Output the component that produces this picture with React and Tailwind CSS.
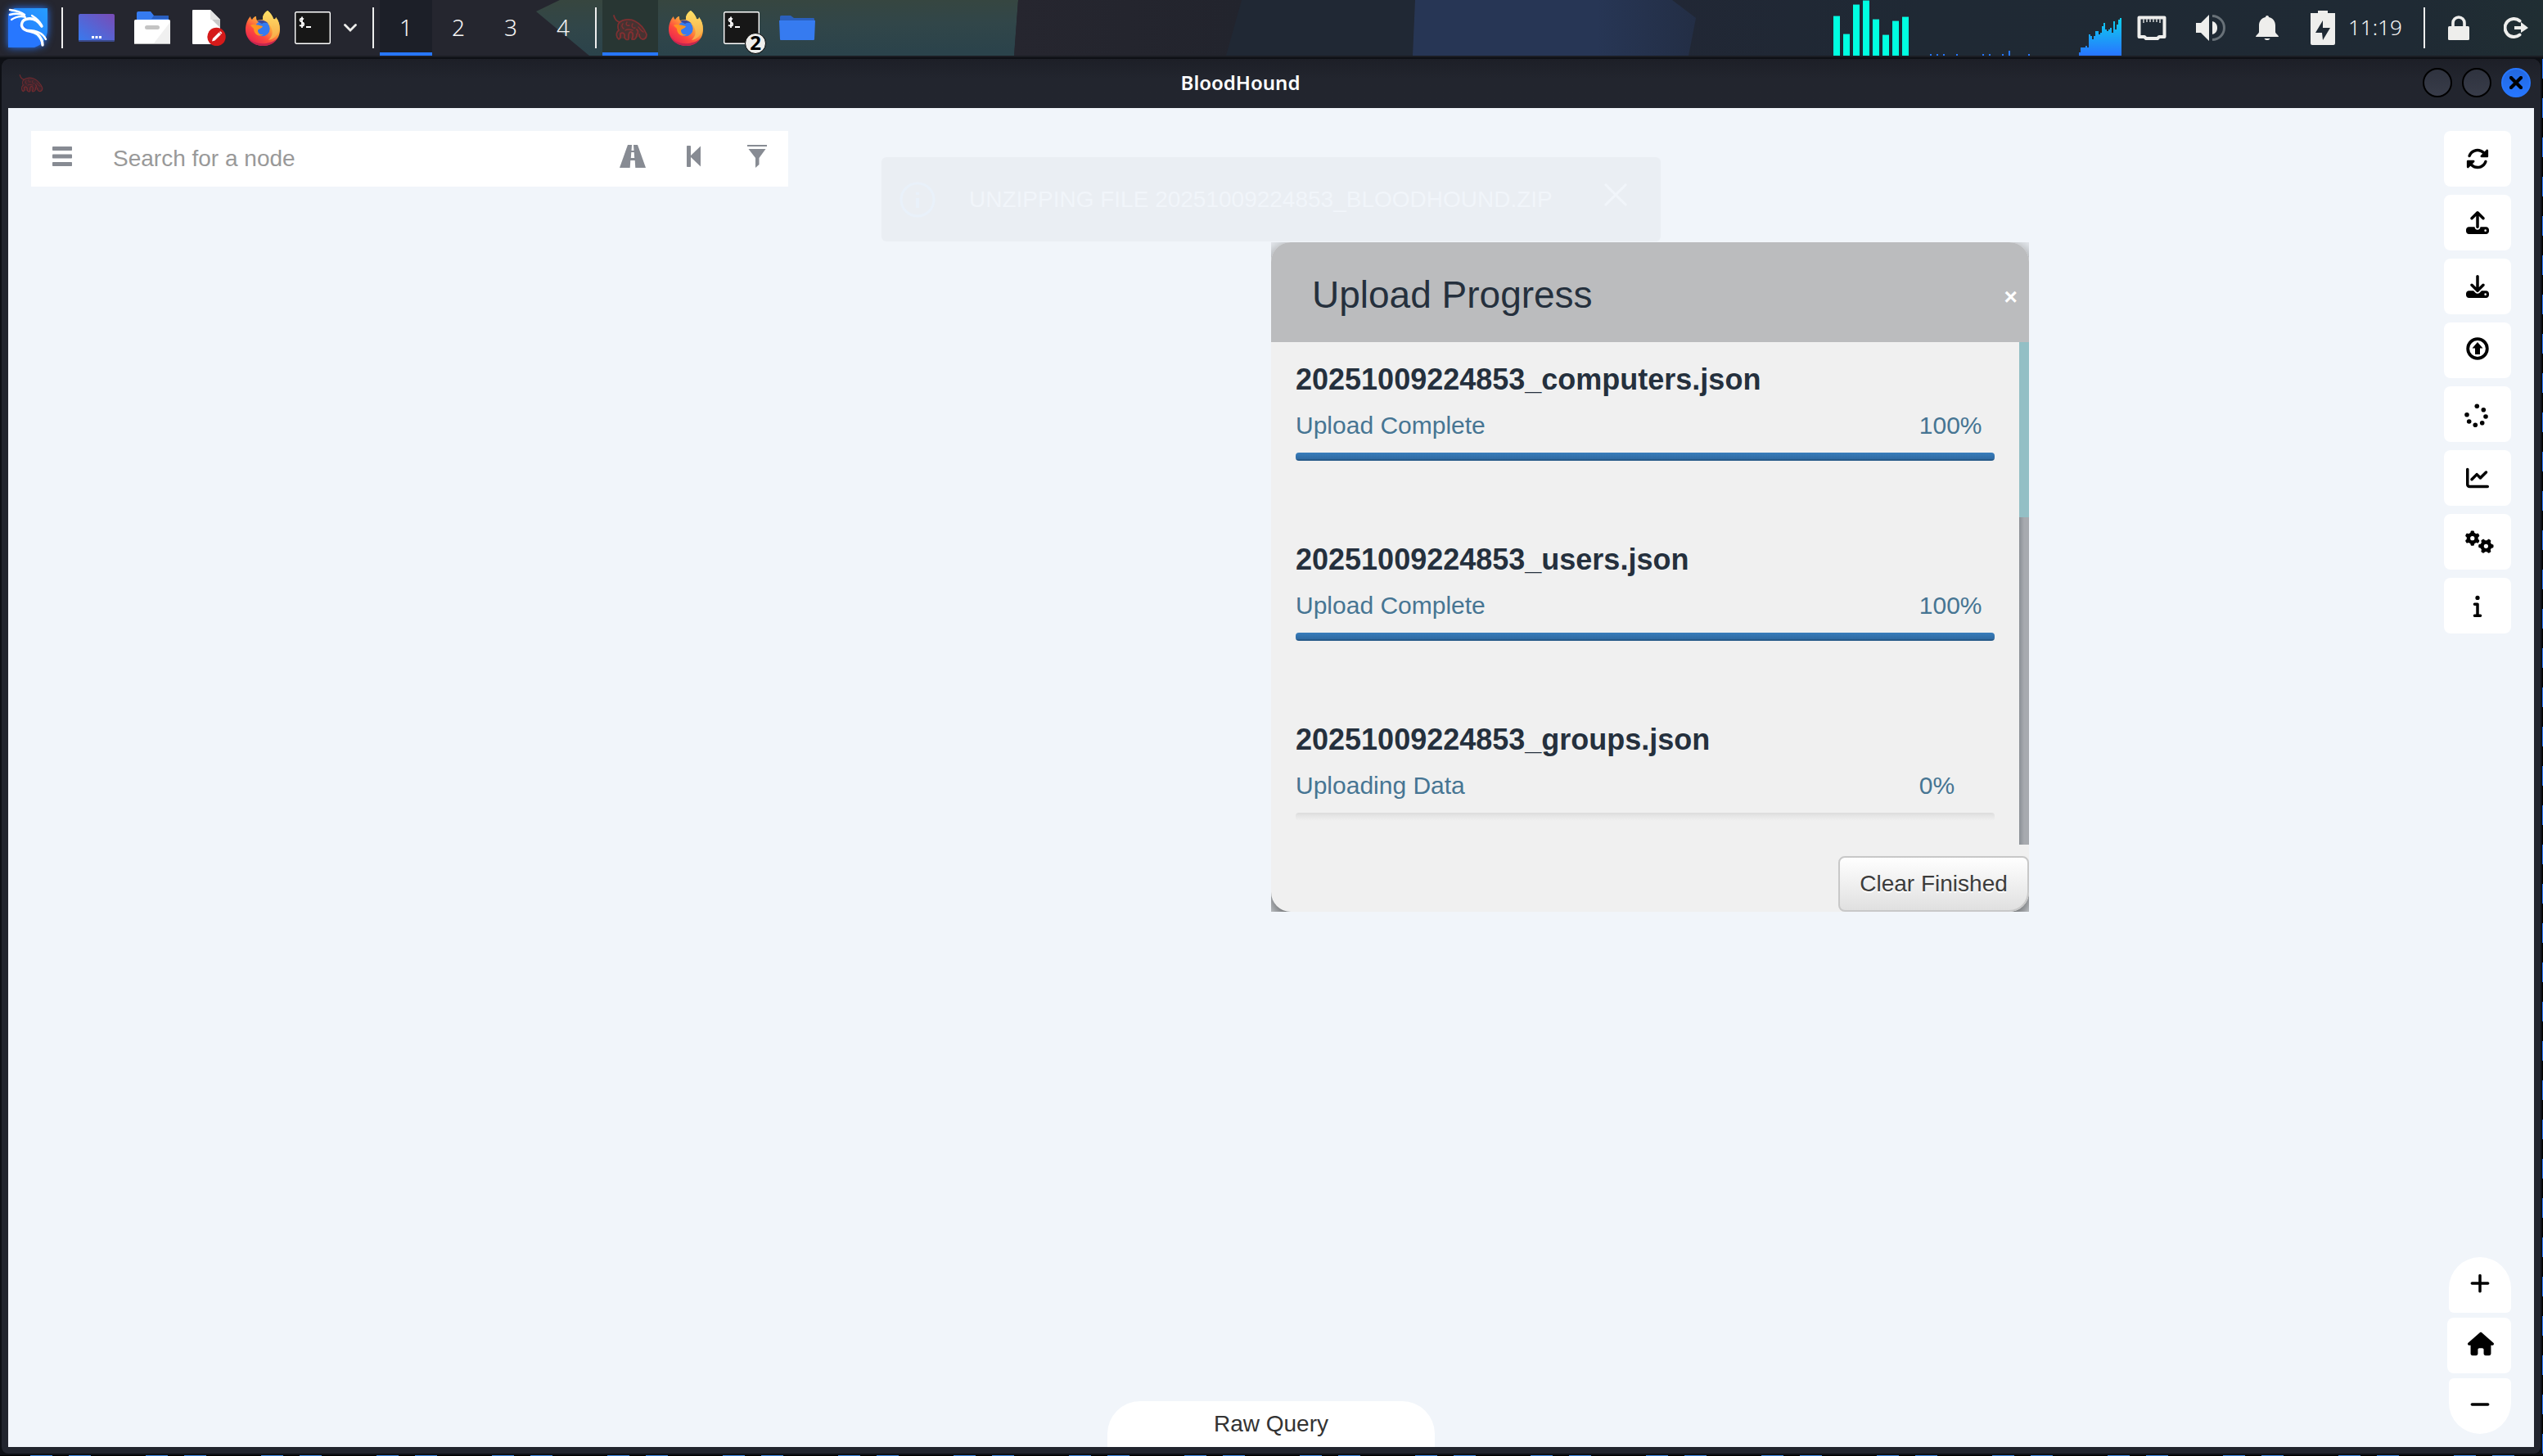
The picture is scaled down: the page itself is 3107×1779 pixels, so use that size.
import React from "react";
import {
  FaRotate,
  FaUpload,
  FaDownload,
  FaChartLine,
  FaGears,
  FaInfo,
  FaPlus,
  FaHouse,
  FaMinus,
} from "react-icons/fa6";

/* ---------- panel artwork ---------- */

function PanelBackdrop() {
  return (
    <svg className="absolute inset-0 h-full w-full" viewBox="0 0 3107 68" preserveAspectRatio="none" aria-hidden="true">
      <defs>
        <linearGradient id="green" x1="0" y1="0" x2="0.1" y2="1">
          <stop offset="0" stopColor="#37463f" />
          <stop offset="0.5" stopColor="#314649" />
          <stop offset="1" stopColor="#2b434b" />
        </linearGradient>
        <linearGradient id="plum" x1="0" y1="0" x2="1" y2="0">
          <stop offset="0" stopColor="#26262f" />
          <stop offset="1" stopColor="#22242d" />
        </linearGradient>
        <linearGradient id="navy" x1="0" y1="0" x2="1" y2="0">
          <stop offset="0" stopColor="#273655" />
          <stop offset="0.65" stopColor="#273655" />
          <stop offset="1" stopColor="#232e45" />
        </linearGradient>
        <linearGradient id="slate" x1="0" y1="0" x2="1" y2="0">
          <stop offset="0" stopColor="#212735" />
          <stop offset="0.3" stopColor="#1f2934" />
          <stop offset="0.85" stopColor="#1f2a34" />
          <stop offset="1" stopColor="#202e33" />
        </linearGradient>
      </defs>
      <rect width="3107" height="68" fill="#25262f" />
      <path d="M655 14 L684 0 H1244 L1239 68 H720 Z" fill="url(#green)" />
      <path d="M1244 0 H1517 L1498 68 H1239 Z" fill="url(#plum)" />
      <path d="M1517 0 H1729 L1726 68 H1498 Z" fill="#202834" />
      <path d="M2030 0 H3107 V68 H2030 Z" fill="url(#slate)" />
      <path d="M1729 0 H2043 L2072 22 L2063 68 H1726 Z" fill="url(#navy)" />
    </svg>
  );
}

function DragonLogo() {
  return (
    <svg className="size-12 drop-shadow-[0_0_5px_#2777ff]" viewBox="0 0 48 48" aria-hidden="true">
      <defs>
        <linearGradient id="kali" x1="1" y1="0" x2="0" y2="1">
          <stop offset="0" stopColor="#269dff" />
          <stop offset="0.5" stopColor="#2687ff" />
          <stop offset="0.52" stopColor="#2777ff" />
          <stop offset="1" stopColor="#2777ff" />
        </linearGradient>
      </defs>
      <path d="M8 0H48V26C48 36 42 45 32 48H0V8C3 4 4 2 8 0Z" fill="url(#kali)" />
      <g fill="none" stroke="#fff" strokeLinecap="round" strokeLinejoin="round">
        <path d="M2 2C9 3 15 4 20 8" strokeWidth="2.4" />
        <path d="M2 8C9 6 14 6 20 9" strokeWidth="2.4" />
        <path d="M4 14C10 10 15 9 21 11" strokeWidth="2.2" />
        <path d="M41 22C37 16 31 12 24 13C16 14 14 22 20 26C25 29 31 28 36 32C40 36 42 40 42 45" strokeWidth="3.4" />
        <path d="M24 27C34 27 42 30 46 38" strokeWidth="2.4" />
        <path d="M29 9C34 12 38 15 41 21" strokeWidth="2.2" />
      </g>
    </svg>
  );
}

function DesktopIcon() {
  return (
    <svg className="h-[34px] w-11" viewBox="0 0 44 34" aria-hidden="true">
      <defs>
        <linearGradient id="desk" x1="0" y1="1" x2="1" y2="0">
          <stop offset="0" stopColor="#367bf0" />
          <stop offset="1" stopColor="#7a4bb5" />
        </linearGradient>
      </defs>
      <rect width="44" height="34" rx="2" fill="url(#desk)" />
      <path d="M0 32H44V32Q44 34 42 34H2Q0 34 0 32Z" fill="#3b4a8c" />
      <path d="M16 27h3v3h-3zM20.500 27h3v3h-3zM25 27h3v3h-3z" fill="#fff" />
    </svg>
  );
}

function FilesIcon() {
  return (
    <svg className="h-10 w-11" viewBox="0 0 44 40" aria-hidden="true">
      <path d="M3 2Q3 0 5 0H20L24 5H41Q42 5 42 7V12H3Z" fill="#367bf0" />
      <path d="M24 5H41Q42 5 42 7V9H21Z" fill="#2a5fbf" />
      <rect y="10" width="44" height="30" rx="1.500" fill="#fff" />
      <path d="M23 40L44 13V38.500Q44 40 42.500 40Z" fill="#f0f0f0" />
      <rect x="13" y="17" width="18" height="5" rx="2.500" fill="#c4c4c4" />
      <rect y="39" width="44" height="1" fill="#b9b9b9" />
    </svg>
  );
}

function EditorIcon() {
  return (
    <svg className="h-11 w-[41px]" viewBox="0 0 41 44" aria-hidden="true">
      <path d="M1 0H22L34 12V42H1Q0 42 0 41V1Q0 0 1 0Z" fill="#fff" />
      <path d="M22 0L34 12H22Z" fill="#e3e3e3" />
      <path d="M24 12H34V22Z" fill="#c9c9c9" />
      <circle cx="29.500" cy="33" r="11.200" fill="#d51a1a" />
      <path d="M24 38.500L25 35L32.500 27.500L35 30L27.500 37.500Z" fill="#fff" />
      <path d="M33 27L35.500 29.500L36.300 28.200L34.200 26.200Z" fill="#fff" />
    </svg>
  );
}

function FirefoxIcon() {
  return (
    <svg className="h-[43px] w-[42px]" viewBox="0 0 42 43" aria-hidden="true">
      <defs>
        <linearGradient id="fox" x1="0.85" y1="0.1" x2="0.25" y2="0.95">
          <stop offset="0" stopColor="#ffe45c" />
          <stop offset="0.4" stopColor="#ffa13a" />
          <stop offset="0.7" stopColor="#ff4a3d" />
          <stop offset="1" stopColor="#e8264f" />
        </linearGradient>
        <linearGradient id="foxtail" x1="0" y1="0" x2="0" y2="1">
          <stop offset="0" stopColor="#ffe066" />
          <stop offset="1" stopColor="#f7a848" />
        </linearGradient>
      </defs>
      <path d="M27 0C31 3 33 7 34 10C36 11 37 10 37 8C41 13 42 18 42 23C42 35 33 43 21 43C9 43 0 34 0 23C0 16 3 10 6 7C6 9 7 10 8 11C9 9 11 7 13 7C13 9 13 10 14 12C17 11 19 11 21 11C21 6 23 2 27 0Z" fill="url(#fox)" />
      <path d="M27 0C31 3 33 7 34 10C36 11 37 10 37 8C41 13 42 18 41 24C39 31 34 35 28 36C33 31 34 26 31 20C28 14 21 13 21 9C21 5 24 2 27 0Z" fill="url(#foxtail)" />
      <circle cx="20.500" cy="22" r="9.200" fill="#367bf0" />
      <path d="M14 13C18 11 24 11 28 16C25 14 22 15 20 16Z" fill="#3a4a9c" />
      <path d="M6 18C9 16 14 17 21 19C20 22 16 22 15 24C15 28 18 30 22 29C17 33 10 29 10 22Z" fill="#ff9420" />
      <path d="M2 31C7 39 16 41 25 40C31 39 36 37 39 33C36 40 29 43 21 43C12 43 5 38 2 31Z" fill="#c4264f" />
    </svg>
  );
}

function TerminalIcon() {
  return (
    <svg className="h-10 w-11" viewBox="0 0 44 40" aria-hidden="true">
      <rect x="0.700" y="0.700" width="42.600" height="38.600" rx="1.500" fill="#171717" stroke="#fff" strokeWidth="1.400" />
      <path d="M11 9.500C9 8 6.500 8.500 6.500 10.500C6.500 13 11.300 12.500 11.300 15.500C11.300 18 8 18.200 6 16.800M9 6.500V20" fill="none" stroke="#fff" strokeWidth="1.800" />
      <rect x="14" y="18" width="6" height="2" fill="#fff" />
    </svg>
  );
}

function HoundIcon({ className, color }) {
  return (
    <svg className={className} viewBox="0 0 42 32" aria-hidden="true">
      <path d="M8 9C15 5 24 6 29 10C35 14 39 19 41 28L38 30L32 27L24 29L18 29L8 29L6 24L8 17Z" fill={color} opacity="0.3" />
      <g fill="none" stroke={color} strokeWidth="1.800" strokeLinecap="round" strokeLinejoin="round" opacity="0.85">
        <path d="M1 1C2 5 4 8 8 9C14 5 22 5 27 8C33 11 38 17 41 24C41 28 39 30 36 30C33 29 32 27 32 24" />
        <path d="M8 9C5 12 6 17 7 19C3 22 4 28 7 30C10 29 9 26 9 23C12 21 15 23 14 27C14 30 17 31 19 30C19 26 18 23 21 21C25 21 25 26 23 30C27 31 29 28 29 24C31 22 31 20 29 18" />
        <path d="M12 11C10 13 11 16 13 17M17 9C15 12 17 14 20 13M24 11C22 14 24 17 27 16M31 15C33 17 34 20 37 21M15 19C18 17 21 18 24 19" strokeWidth="1.400" />
      </g>
    </svg>
  );
}

function FolderIcon() {
  return (
    <svg className="h-[30px] w-11" viewBox="0 0 44 30" aria-hidden="true">
      <path d="M1 1.500Q1 0 2.500 0H14L18 3H42Q43 3 43 4.500V10H1Z" fill="#2b60bd" />
      <path d="M0 6H44L43 29Q43 30 42 30H2Q1 30 1 29Z" fill="#367bf0" />
    </svg>
  );
}

function Separator() {
  return <span className="block h-[50px] w-0.5 shrink-0 bg-[#eeeeee]" />;
}

const coreLoad = [49, 27, 63, 68, 45, 26, 43, 48];
const diskTicks = [
  [0, 2], [8, 2], [16, 2], [32, 2], [64, 2], [72, 2], [88, 2], [96, 6], [120, 2],
];
const cpuHistory = [4, 10, 10, 10, 12, 10, 26, 24, 20, 24, 30, 30, 26, 28, 36, 40, 32, 30, 32, 34, 28, 42, 32, 38, 44, 46];

function CoreLoad() {
  return (
    <svg className="h-[68px] w-[92px]" viewBox="0 0 92 68" aria-label="Core load">
      {coreLoad.map((h, i) => (
        <g key={i}>
          <rect x={i * 12} y={68 - h} width="8" height={h} fill="#00ffe1" />
          <rect x={i * 12} y={68 - h} width="8" height="1" fill="#1b7d7d" />
        </g>
      ))}
    </svg>
  );
}

function DiskTicks() {
  return (
    <svg className="h-[68px] w-[122px]" viewBox="0 0 122 68" aria-label="Disk activity">
      {diskTicks.map(([x, h]) => (
        <rect key={x} x={x} y={68 - h} width="2" height={h} fill="#2777ff" />
      ))}
    </svg>
  );
}

function CpuGraph() {
  return (
    <svg className="h-[68px] w-[52px]" viewBox="0 0 52 68" aria-label="CPU history">
      <defs>
        <linearGradient id="cpu" gradientUnits="userSpaceOnUse" x1="0" y1="18" x2="0" y2="68">
          <stop offset="0" stopColor="#0bd8ec" />
          <stop offset="1" stopColor="#2874ff" />
        </linearGradient>
      </defs>
      {cpuHistory.map((h, i) => (
        <rect key={i} x={i * 2} y={68 - h} width="2" height={h} fill="url(#cpu)" shapeRendering="crispEdges" />
      ))}
    </svg>
  );
}

function EthernetIcon() {
  return (
    <svg className="h-[30px] w-9" viewBox="0 0 36 30" aria-hidden="true">
      <path d="M2.500 2.500H33.500V26H27L25 28H11L9 26H2.500Z" fill="none" stroke="#eeeeec" strokeWidth="4" strokeLinejoin="round" />
      <path d="M8 4V9M12 4V8M16 4V8M20 4V8M24 4V8M28 4V9" stroke="#c9cccd" strokeWidth="1.600" />
    </svg>
  );
}

function VolumeIcon() {
  return (
    <svg className="h-8 w-9" viewBox="0 0 36 32" aria-hidden="true">
      <path d="M0 10H6L16 0V32L6 22H0Z" fill="#eeeeec" />
      <path d="M20 8C24 9 26 12 26 16C26 20 24 23 20 24Z" fill="#eeeeec" />
      <path d="M20 1.500A14.500 14.500 0 0 1 20 30.500" fill="none" stroke="#687178" strokeWidth="3" />
    </svg>
  );
}

function BellIcon() {
  return (
    <svg className="h-[30px] w-7" viewBox="0 0 28 30" aria-hidden="true">
      <path d="M14 0C15.200 0 16 0.800 16 2C21 3 24 7 24 12V20C24 22 28 24 28 26H0C0 24 4 22 4 20V12C4 7 7 3 12 2C12 0.800 12.800 0 14 0Z" fill="#eeeeec" />
      <path d="M10.500 28H17.500C17 29.500 15.500 30 14 30C12.500 30 11 29.500 10.500 28Z" fill="#eeeeec" />
    </svg>
  );
}

function BatteryIcon() {
  return (
    <svg className="h-[42px] w-[30px]" viewBox="0 0 30 42" aria-hidden="true">
      <path
        fillRule="evenodd"
        d="M9 0H21V3H30V40Q30 42 28 42H2Q0 42 0 40V3H9ZM15 12L6 27H14L15 36L24 21H15Z"
        fill="#eeeeec"
      />
    </svg>
  );
}

function LockIcon() {
  return (
    <svg className="h-[30px] w-[26px]" viewBox="0 0 26 30" aria-hidden="true">
      <rect y="13" width="26" height="17" rx="1.500" fill="#eeeeec" />
      <path d="M6 14V9A7 7 0 0 1 20 9V14" fill="none" stroke="#eeeeec" strokeWidth="3.600" />
    </svg>
  );
}

function LogoutIcon() {
  return (
    <svg className="h-[26px] w-[30px]" viewBox="0 0 30 26" aria-hidden="true">
      <path d="M19.500 4.500A11 11 0 1 0 19.500 21.500" fill="none" stroke="#eeeeec" strokeWidth="4" strokeLinecap="round" />
      <path d="M13 11H21V6L30 13L21 19V15H13Z" fill="#eeeeec" />
    </svg>
  );
}

function ChevronDown() {
  return (
    <svg className="h-2.5 w-4" viewBox="0 0 16 10" aria-hidden="true">
      <path d="M1.500 1.500L8 8L14.500 1.500" fill="none" stroke="#eeeeec" strokeWidth="2.800" strokeLinecap="round" />
    </svg>
  );
}

const workspaces = ["1", "2", "3", "4"];

function Workspace({ label, active }) {
  return (
    <button
      type="button"
      className={
        active
          ? "flex h-[68px] w-16 items-center justify-center border-b-4 border-[#2777ff] bg-[#1c1f28] pt-0.5 font-light text-[#f5f5f5]"
          : "flex h-[68px] w-16 items-center justify-center pb-0.5 font-light text-[#f5f5f5]"
      }
    >
      {label}
    </button>
  );
}

function TopPanel() {
  return (
    <header className="relative h-[68px] shrink-0 font-['Noto_Sans','Open_Sans',sans-serif] text-[28px] leading-none">
      <PanelBackdrop />
      <div className="relative flex h-full items-center pr-[18px] pl-2.5">
        <button type="button" aria-label="Applications"><DragonLogo /></button>
        <span className="ml-[17px]"><Separator /></span>
        <div className="ml-[19px] flex items-center gap-6">
          <button type="button" aria-label="Show desktop"><DesktopIcon /></button>
          <button type="button" aria-label="File manager"><FilesIcon /></button>
          <button type="button" aria-label="Text editor" className="flex w-11 justify-end"><EditorIcon /></button>
          <button type="button" aria-label="Firefox"><FirefoxIcon /></button>
        </div>
        <button type="button" aria-label="Terminal" className="ml-[18px]"><TerminalIcon /></button>
        <button type="button" aria-label="More terminals" className="ml-4"><ChevronDown /></button>
        <span className="ml-[19px]"><Separator /></span>
        <nav className="ml-[7px] flex">
          {workspaces.map((w, i) => (
            <Workspace key={w} label={w} active={i === 0} />
          ))}
        </nav>
        <span className="ml-[7px]"><Separator /></span>
        <button type="button" aria-label="BloodHound" className="ml-[7px] flex h-[68px] w-[68px] items-center justify-center border-b-4 border-[#2777ff] bg-[#283633] pt-1">
          <HoundIcon className="h-8 w-[42px]" color="#8e2f31" />
        </button>
        <button type="button" aria-label="Firefox window" className="ml-[13px]"><FirefoxIcon /></button>
        <button type="button" aria-label="Terminal windows" className="relative ml-[25px]">
          <TerminalIcon />
          <span className="absolute -right-2 -bottom-3 flex size-[26px] items-center justify-center rounded-full border border-black bg-[#eeeeec] pb-0.5 text-2xl leading-none font-bold text-black">
            2
          </span>
        </button>
        <button type="button" aria-label="Folder" className="ml-6"><FolderIcon /></button>

        <div className="ml-auto flex items-center">
          <CoreLoad />
          <span className="ml-[26px]"><DiskTicks /></span>
          <span className="ml-[60px]"><CpuGraph /></span>
          <button type="button" aria-label="Network" className="ml-[19px]"><EthernetIcon /></button>
          <button type="button" aria-label="Volume" className="ml-9"><VolumeIcon /></button>
          <button type="button" aria-label="Notifications" className="ml-[37px]"><BellIcon /></button>
          <button type="button" aria-label="Battery" className="ml-[39px]"><BatteryIcon /></button>
          <time className="ml-4 flex w-[74px] pb-0.5 text-[26px] font-light text-[#f5f5f5]">11:19</time>
          <span className="ml-[18px]"><Separator /></span>
          <button type="button" aria-label="Lock" className="ml-7"><LockIcon /></button>
          <button type="button" aria-label="Log out" className="ml-[42px]"><LogoutIcon /></button>
        </div>
      </div>
    </header>
  );
}

/* ---------- window ---------- */

function TitleBar() {
  return (
    <div className="grid h-[60px] shrink-0 grid-cols-[1fr_auto_1fr] items-center rounded-t-[10px] bg-linear-to-b from-[#1d1f27] to-[#22252e] to-40% pr-3 pl-[21px]">
      <HoundIcon className="h-[22px] w-[30px]" color="#7c2b30" />
      <h1 className="pr-[84px] pb-0.5 font-['Noto_Sans','Open_Sans',sans-serif] text-2xl font-semibold text-white">BloodHound</h1>
      <div className="flex gap-3 justify-self-end pb-0.5">
        <button type="button" aria-label="Minimize" className="size-9 rounded-full border-2 border-black bg-linear-to-b from-[#2f333f] to-[#383c49]" />
        <button type="button" aria-label="Maximize" className="size-9 rounded-full border-2 border-black bg-linear-to-b from-[#2f333f] to-[#383c49]" />
        <button type="button" aria-label="Close" className="flex size-9 items-center justify-center rounded-full border-2 border-[#2777ff] bg-linear-to-b from-[#2268e0] to-[#2777ff]">
          <svg className="size-4" viewBox="0 0 16 16" aria-hidden="true">
            <path d="M2 2L14 14M14 2L2 14" stroke="#000" strokeWidth="4.200" strokeLinecap="square" />
          </svg>
        </button>
      </div>
    </div>
  );
}

function HamburgerGlyph() {
  return (
    <svg className="size-6" viewBox="0 0 24 24" fill="#878b93" aria-hidden="true">
      <rect width="24" height="5" rx="0.800" />
      <rect y="9.500" width="24" height="5" rx="0.800" />
      <rect y="19" width="24" height="5" rx="0.800" />
    </svg>
  );
}

function RoadGlyph() {
  return (
    <svg className="h-7 w-8" viewBox="0 0 32 28" aria-hidden="true">
      <path d="M10 0H22L32 28H0Z" fill="#878b93" />
      <path d="M15 0H17L17.500 7H14.500ZM14.300 9H17.700L18.200 16H13.800ZM13.300 19H18.700L19.300 28H12.700Z" fill="#fff" />
    </svg>
  );
}

function StepBackGlyph() {
  return (
    <svg className="h-[26px] w-[17px]" viewBox="0 0 17 26" fill="#878b93" aria-hidden="true">
      <rect width="5" height="26" rx="0.800" />
      <path d="M17 0.500V25.500L5 14V12Z" />
    </svg>
  );
}

function FilterGlyph() {
  return (
    <svg className="h-7 w-6" viewBox="0 0 24 28" fill="#878b93" aria-hidden="true">
      <path d="M0 0H24V2H0Z" />
      <path d="M1.500 5H22.500L14.500 16V24L10 28V16Z" />
    </svg>
  );
}

function SearchBar() {
  return (
    <form className="flex h-[68px] w-full max-w-[925px] items-center bg-white px-[26px]" onSubmit={(e) => e.preventDefault()}>
      <button type="button" aria-label="Menu" className="pb-1.5"><HamburgerGlyph /></button>
      <input
        type="text"
        aria-label="Search for a node"
        placeholder="Search for a node"
        className="ml-[50px] h-full min-w-0 flex-1 bg-transparent text-[28px] text-[#333] outline-none placeholder:text-[#999]"
      />
      <button type="button" aria-label="Pathfinding" className="pb-1.5"><RoadGlyph /></button>
      <button type="button" aria-label="Back" className="ml-[50px] pb-1.5"><StepBackGlyph /></button>
      <button type="button" aria-label="Filter" className="ml-[57px] pb-1.5"><FilterGlyph /></button>
    </form>
  );
}

function CircleUpIcon({ className }) {
  return (
    <svg className={className} viewBox="0 0 28 32" aria-hidden="true">
      <circle cx="14" cy="14" r="11.800" fill="none" stroke="currentColor" strokeWidth="3.800" />
      <path d="M14 6L20.500 13.500H17V21H11V13.500H7.500Z" fill="currentColor" />
    </svg>
  );
}

const spinnerDots = [
  [13.3, 4.3], [21.3, 8.7], [24, 17], [19.7, 24.7], [11.3, 27.3], [3.7, 23], [1, 14.7],
];

function SpinnerIcon({ className }) {
  return (
    <svg className={className} viewBox="0 0 28 28" overflow="visible" fill="currentColor" aria-hidden="true">
      {spinnerDots.map(([x, y]) => (
        <circle key={x} cx={x} cy={y} r="2.800" />
      ))}
    </svg>
  );
}

const tools = [
  { label: "Refresh", Icon: FaRotate, size: "size-7" },
  { label: "Export graph", Icon: FaUpload, size: "size-7" },
  { label: "Import graph", Icon: FaDownload, size: "size-7" },
  { label: "Upload data", Icon: CircleUpIcon, size: "h-8 w-7" },
  { label: "Upload status", Icon: SpinnerIcon, size: "size-7" },
  { label: "Change layout", Icon: FaChartLine, size: "size-7" },
  { label: "Settings", Icon: FaGears, size: "ml-1 h-7 w-[35px]" },
  { label: "About", Icon: FaInfo, size: "size-7" },
];

function SideTools() {
  return (
    <aside className="flex flex-col items-end justify-between justify-self-end pb-4 text-black">
      <div className="flex flex-col gap-2.5">
        {tools.map(({ label, Icon, size }) => (
          <button key={label} type="button" aria-label={label} className="flex h-[68px] w-[82px] items-center justify-center rounded-lg bg-white">
            <Icon className={size} />
          </button>
        ))}
      </div>
      <div className="flex flex-col items-end gap-1.5">
        <button type="button" aria-label="Zoom in" className="flex h-[68px] w-[76px] items-center justify-center rounded-t-[38px] rounded-b-md bg-white pb-1">
          <FaPlus className="size-7" />
        </button>
        <button type="button" aria-label="Home" className="flex h-[68px] w-[78px] items-center justify-center rounded-lg bg-white pb-1">
          <FaHouse className="ml-1 size-8" />
        </button>
        <button type="button" aria-label="Zoom out" className="flex h-[68px] w-[76px] items-center justify-center rounded-t-md rounded-b-[38px] bg-white pb-1">
          <FaMinus className="size-7" />
        </button>
      </div>
    </aside>
  );
}

function Toast() {
  return (
    <div role="status" className="absolute top-[60px] left-1/2 flex h-[103px] w-[952px] -translate-x-1/2 items-center rounded-md bg-[#eaeef3] pr-10 pl-[22px] text-[28px] text-[#f1f5fa]">
      <svg className="size-11" viewBox="0 0 44 44" aria-hidden="true">
        <circle cx="22" cy="22" r="20" fill="none" stroke="#e9f1fa" strokeWidth="3" />
        <path d="M22 13V16M22 20V32" stroke="#e9f1fa" strokeWidth="4" />
      </svg>
      <p className="ml-[41px] flex-1 whitespace-nowrap">UNZIPPING FILE 20251009224853_BLOODHOUND.ZIP</p>
      <button type="button" aria-label="Dismiss" className="mb-3">
        <svg className="size-[30px]" viewBox="0 0 30 30" aria-hidden="true">
          <path d="M2 2L28 28M28 2L2 28" stroke="#f1f5fa" strokeWidth="3" />
        </svg>
      </button>
    </div>
  );
}

const uploads = [
  { file: "20251009224853_computers.json", status: "Upload Complete", percent: 100 },
  { file: "20251009224853_users.json", status: "Upload Complete", percent: 100 },
  { file: "20251009224853_groups.json", status: "Uploading Data", percent: 0 },
];

function UploadItem({ file, status, percent }) {
  return (
    <li className="h-[220px]">
      <h3 className="text-4xl leading-10 font-bold text-[#25303d]">{file}</h3>
      <div className="mt-3.5 flex justify-between text-[30px] leading-[44px] text-[#467593]">
        <span>{status}</span>
        <span className="w-[92px]">{percent}%</span>
      </div>
      <div
        role="progressbar"
        aria-label={file}
        aria-valuenow={percent}
        aria-valuemin={0}
        aria-valuemax={100}
        className="mt-[11px] h-2.5 overflow-hidden rounded-[4px] bg-linear-to-b from-[#dcdcdc] via-[#e8e8e8] to-[#f0f0f0]"
      >
        <div className="h-full border-b-2 border-[#275a89] bg-linear-to-b from-[#387dbb] to-[#2f6aa2]" style={{ width: `${percent}%` }} hidden={percent === 0} />
      </div>
    </li>
  );
}

function UploadDialog() {
  return (
    <div className="absolute top-[164px] left-1/2 w-[30%] overflow-hidden">
      <section role="dialog" aria-label="Upload Progress" className="overflow-hidden rounded-3xl bg-[#f0f0f0] shadow-[0_10px_30px_rgba(0,0,0,0.8)]">
        <header className="flex h-[122px] items-center justify-between bg-[#bbbcbe] pt-1.5 pr-3.5 pl-[50px]">
          <h2 className="text-[46px] leading-[60px] text-[#25303d]">Upload Progress</h2>
          <button type="button" aria-label="Close dialog" className="pt-1.5 text-[28px] leading-8 font-bold text-white">×</button>
        </header>
        <div className="flex h-[614px]">
          <ul className="min-w-0 flex-1 overflow-hidden px-[30px] pt-[26px]">
            {uploads.map((u) => (
              <UploadItem key={u.file} {...u} />
            ))}
          </ul>
          <div className="w-3 bg-linear-to-r from-[#8b9096] via-[#a7aaaf] to-[#a7aaaf]">
            <div className="h-[214px] bg-[#93bfc5]" />
          </div>
        </div>
        <footer className="flex justify-end pt-3.5">
          <button
            type="button"
            className="h-[68px] rounded-lg rounded-br-3xl border-2 border-[#c8c8c8] bg-linear-to-b from-white to-[#e0e0e0] px-6 text-[28px] text-[#3c3c3c] [text-shadow:0_2px_0_#fff]"
          >
            Clear Finished
          </button>
        </footer>
      </section>
    </div>
  );
}

function GraphView() {
  return (
    <main className="relative mx-2 grid flex-1 grid-cols-[1fr_auto_1fr] bg-[#f1f5fa] px-7 pt-7">
      <SearchBar />
      <button type="button" className="h-14 w-[400px] self-end rounded-t-[40px] bg-white text-[28px] text-[#333]">
        Raw Query
      </button>
      <SideTools />
      <Toast />
      <UploadDialog />
    </main>
  );
}

export default function App() {
  return (
    <div className="flex h-screen flex-col overflow-hidden bg-black font-['Liberation_Sans',Arial,sans-serif]">
      <TopPanel />
      <div className="h-0.5 shrink-0 bg-[#1b1d23]" />
      <div className="flex flex-1 bg-[#0e1015] pt-0.5 pl-0.5">
        <div className="flex flex-1 flex-col rounded-t-[10px] rounded-b-lg bg-[#22252e] pb-2">
          <TitleBar />
          <GraphView />
        </div>
        <div className="w-0.5 bg-[#0e1015]" />
        <div className="w-px bg-[repeating-linear-gradient(to_bottom,#2777ff_0_24px,#000_24px_48px)]" />
      </div>
      <div className="h-0.5 shrink-0 bg-[#0e1015]" />
      <div className="h-px shrink-0 bg-[repeating-linear-gradient(to_right,#000_0_37px,#3a86e0_37px_64px,#000_64px_84px,#3a86e0_84px_111px,#000_111px_141px)]" />
    </div>
  );
}
